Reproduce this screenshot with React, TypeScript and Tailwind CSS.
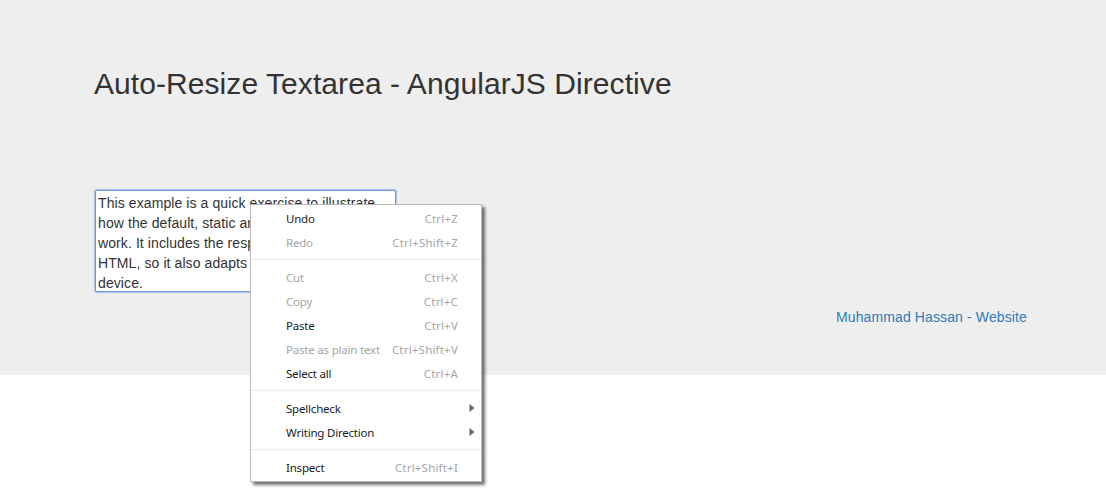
const sans = "font-['Liberation_Sans',Arial,sans-serif]";

type Item = { label: string; shortcut?: string; disabled?: boolean; arrow?: boolean } | "sep";

const items: Item[] = [
  { label: "Undo", shortcut: "Ctrl+Z" },
  { label: "Redo", shortcut: "Ctrl+Shift+Z", disabled: true },
  "sep",
  { label: "Cut", shortcut: "Ctrl+X", disabled: true },
  { label: "Copy", shortcut: "Ctrl+C", disabled: true },
  { label: "Paste", shortcut: "Ctrl+V" },
  { label: "Paste as plain text", shortcut: "Ctrl+Shift+V", disabled: true },
  { label: "Select all", shortcut: "Ctrl+A" },
  "sep",
  { label: "Spellcheck", arrow: true },
  { label: "Writing Direction", arrow: true },
  "sep",
  { label: "Inspect", shortcut: "Ctrl+Shift+I" },
];

function Menu() {
  return (
    <div className="absolute left-[250px] top-[204px] w-[232px] h-[278px] bg-white border border-[#bababa] shadow-[3px_3px_3px_rgba(0,0,0,0.55)] pt-[2px] font-['Noto_Sans',sans-serif] text-[11.5px] tracking-[-0.2px]">
      {items.map((it, i) =>
        it === "sep" ? (
          <div key={i} className="h-[11px] pt-[4px]">
            <div className="h-px w-full bg-[#e9e9e9]" />
          </div>
        ) : (
          <div key={i} className="h-[24px] flex items-center justify-between pl-[35px] pr-[23px] relative">
            <span className={it.disabled ? "text-[#a6a6a6]" : "text-[#1a1a1a]"}>{it.label}</span>
            {it.shortcut && <span className="text-[#a6a6a6] tracking-[0.2px]">{it.shortcut}</span>}
            {it.arrow && (
              <svg className="absolute right-[6px] top-[7px]" width="6" height="8" viewBox="0 0 6 8">
                <path d="M0.5 0 L5.5 4 L0.5 8 Z" fill="#666" />
              </svg>
            )}
          </div>
        )
      )}
    </div>
  );
}

export default function App() {
  return (
    <div className={`relative h-[501px] bg-white text-[#333] ${sans}`}>
      <div className="h-[375px] bg-[#eeeeee] pl-[94px] pr-[79px] pt-[63px] flex flex-col">
        <h1 className="text-[30px] leading-[42px] font-normal tracking-[0.07px]">Auto-Resize Textarea - AngularJS Directive</h1>
        <textarea
          readOnly
          className="mt-[85px] ml-px w-[301px] h-[102px] block bg-white border border-[#6d94e0] shadow-[0_0_1px_1px_rgba(109,148,224,0.5)] rounded-[2px] px-[2px] pt-[2px] pb-0 text-[14px] leading-[20px] tracking-[0.09px] resize-none overflow-hidden outline-none text-[#333]"
          defaultValue="This example is a quick exercise to illustrate how the default, static and fixed to top navbar work. It includes the responsive CSS and HTML, so it also adapts to your viewport and device."
        />
        <div className="mt-[15px] flex justify-end text-[14px] leading-[20px] tracking-[0.12px]">
          <a href="#" className="text-[#337ab7]">Muhammad Hassan - Website</a>
        </div>
      </div>
      <Menu />
    </div>
  );
}
